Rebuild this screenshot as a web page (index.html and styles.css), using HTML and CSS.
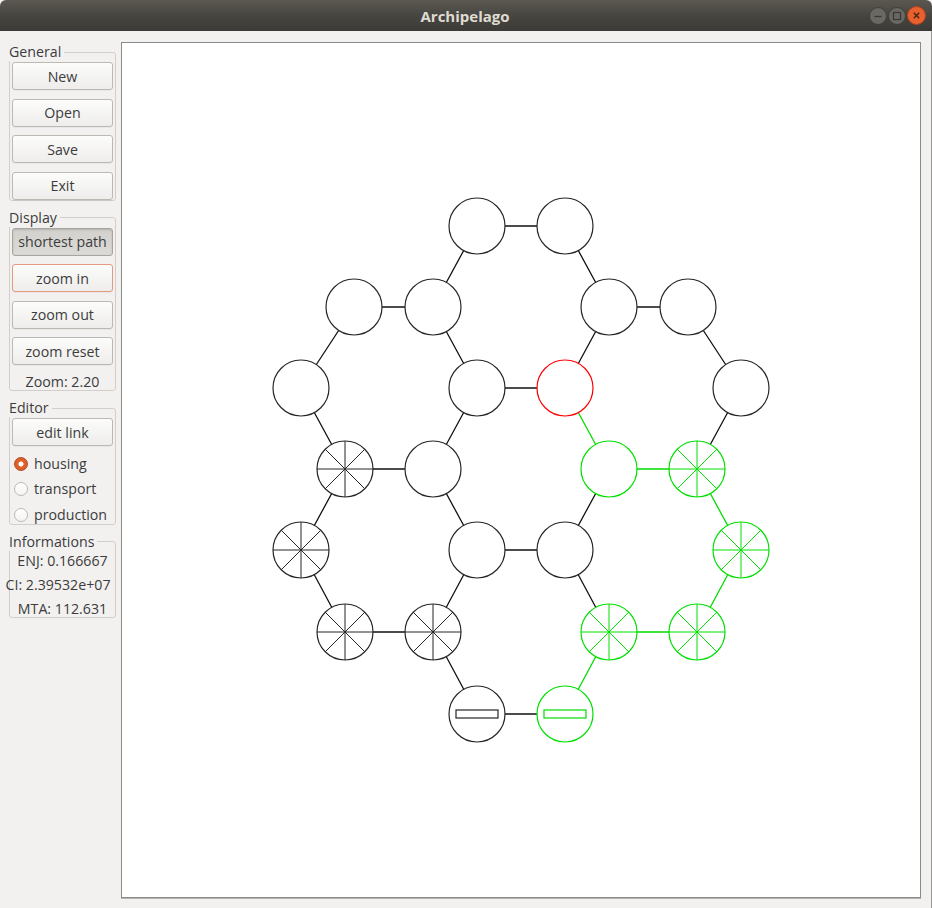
FILE: index.html
```html
<!DOCTYPE html>
<html>
<head>
<meta charset="utf-8">
<title>Archipelago</title>
<link rel="stylesheet" href="styles.css">
</head>
<body>
<div class="window">
  <header class="titlebar">
    <span class="title">Archipelago</span>
    <div class="wbtns">
      <svg class="wb" width="18" height="18" viewBox="0 0 18 18"><circle cx="9" cy="9" r="8.5" class="wb-gray"/><path d="M5.5 9.5H12.5" class="wb-glyph"/></svg>
      <svg class="wb" width="18" height="18" viewBox="0 0 18 18"><circle cx="9" cy="9" r="8.5" class="wb-gray"/><rect x="5.5" y="5.5" width="7" height="7" class="wb-glyph"/></svg>
      <svg class="wb" width="19" height="19" viewBox="0 0 19 19"><circle cx="9.5" cy="9.5" r="9" class="wb-close"/><path d="M6.8 6.8L12.2 12.2M12.2 6.8L6.8 12.2" class="wb-x"/></svg>
    </div>
  </header>
  <div class="main">
    <aside class="panel">
      <fieldset class="group">
        <legend>General</legend>
        <div class="stack">
          <button class="btn">New</button>
          <button class="btn">Open</button>
          <button class="btn">Save</button>
          <button class="btn">Exit</button>
        </div>
      </fieldset>
      <fieldset class="group">
        <legend>Display</legend>
        <div class="stack">
          <button class="btn pressed">shortest path</button>
          <button class="btn focused">zoom in</button>
          <button class="btn">zoom out</button>
          <button class="btn">zoom reset</button>
        </div>
        <div class="zoomlabel">Zoom: 2.20</div>
      </fieldset>
      <fieldset class="group">
        <legend>Editor</legend>
        <button class="btn">edit link</button>
        <div class="radios">
          <label class="radio"><span class="rb checked"></span>housing</label>
          <label class="radio"><span class="rb"></span>transport</label>
          <label class="radio"><span class="rb"></span>production</label>
        </div>
      </fieldset>
      <fieldset class="group">
        <legend>Informations</legend>
        <div class="info">
          <div class="inforow">ENJ: 0.166667</div>
          <div class="inforow wide">CI: 2.39532e+07</div>
          <div class="inforow">MTA: 112.631</div>
        </div>
      </fieldset>
    </aside>
    <div class="canvas">
      <svg class="graph" width="798" height="854" viewBox="122 43 798 854">
        <defs>
          <g id="wheel">
            <circle r="28" class="fillonly"/>
            <path d="M-28 0H28M0 -28V28M-19.8 -19.8L19.8 19.8M-19.8 19.8L19.8 -19.8" class="spokes"/>
            <circle r="28" class="ring"/>
          </g>
          <g id="node">
            <circle r="28" class="disc"/>
          </g>
          <g id="prod">
            <circle r="28" class="disc"/>
            <rect x="-21" y="-4" width="42" height="8" class="bar"/>
          </g>
        </defs>
        <g class="edges black">
          <path d="M477 226L565 226M477 226L433 307M565 226L609 307M354 307L433 307M609 307L688 307M354 307L301 388M433 307L477 388M609 307L565 388M688 307L741 388M477 388L565 388M301 388L345 469M477 388L433 469M741 388L697 469M345 469L433 469M345 469L301 550M433 469L477 550M609 469L565 550M477 550L565 550M301 550L345 632M477 550L433 632M565 550L609 632M345 632L433 632M433 632L477 714M477 714L565 714"/>
        </g>
        <g class="edges green">
          <path d="M565 388L609 469M609 469L697 469M697 469L741 550M741 550L697 632M697 632L609 632M609 632L565 714"/>
        </g>
        <g class="nodes k">
          <use href="#node" x="477" y="226"/>
          <use href="#node" x="565" y="226"/>
          <use href="#node" x="354" y="307"/>
          <use href="#node" x="433" y="307"/>
          <use href="#node" x="609" y="307"/>
          <use href="#node" x="688" y="307"/>
          <use href="#node" x="301" y="388"/>
          <use href="#node" x="477" y="388"/>
          <use href="#node" x="741" y="388"/>
          <use href="#node" x="433" y="469"/>
          <use href="#node" x="477" y="550"/>
          <use href="#node" x="565" y="550"/>
          <use href="#wheel" x="345" y="469"/>
          <use href="#wheel" x="301" y="550"/>
          <use href="#wheel" x="345" y="632"/>
          <use href="#wheel" x="433" y="632"/>
          <use href="#prod" x="477" y="714"/>
        </g>
        <g class="nodes r">
          <use href="#node" x="565" y="388"/>
        </g>
        <g class="nodes g">
          <use href="#node" x="609" y="469"/>
          <use href="#wheel" x="697" y="469"/>
          <use href="#wheel" x="741" y="550"/>
          <use href="#wheel" x="609" y="632"/>
          <use href="#wheel" x="697" y="632"/>
          <use href="#prod" x="565" y="714"/>
        </g>
      </svg>
    </div>
  </div>
</div>
</body>
</html>
```
FILE: styles.css
```css
html, body {
  margin: 0;
  padding: 0;
}
body {
  width: 932px;
  height: 908px;
  overflow: hidden;
  background: #f2f1f0;
  font-family: "Open Sans", "DejaVu Sans", sans-serif;
  color: #3c3c3c;
}
.window {
  width: 932px;
  height: 908px;
  display: flex;
  flex-direction: column;
}
.titlebar {
  height: 31px;
  flex: none;
  display: grid;
  grid-template-columns: 1fr auto 1fr;
  align-items: center;
  background: linear-gradient(#5b5852, #46443f 55%, #3c3b37);
  border-radius: 6px 6px 0 0;
}
.title {
  grid-column: 2;
  color: #dfdbd2;
  font-weight: 700;
  font-size: 15px;
  line-height: 20px;
  margin-right: 2px;
}
.wbtns {
  grid-column: 3;
  justify-self: end;
  display: flex;
  align-items: center;
  gap: 1px;
  margin-right: 6px;
}
.wb {
  display: block;
}
.wb-gray {
  fill: #6a6863;
  stroke: #3f3e3a;
  stroke-width: 1;
}
.wb-glyph {
  fill: none;
  stroke: #3a3935;
  stroke-width: 1.3;
}
.wb-close {
  fill: #e9602f;
  stroke: #b0421a;
  stroke-width: 1;
}
.wb-x {
  fill: none;
  stroke: #4a2412;
  stroke-width: 1.4;
}
.main {
  flex: 1;
  display: flex;
  gap: 5px;
  padding: 11px 10px 0 9px;
  border-right: 1px solid #9a9894;
}
.panel {
  width: 107px;
  flex: none;
  display: flex;
  flex-direction: column;
  gap: 8px;
  margin-top: 1px;
}
.group {
  margin: 0;
  padding: 1px 2px 0 2px;
  border: 1px solid #d2cfcb;
  border-radius: 3px;
  min-width: 0;
}
.group legend {
  padding: 0 3px 0 0;
  margin-left: -3px;
  font-size: 14.2px;
  line-height: 18px;
  color: #3c3c3c;
}
.stack {
  display: flex;
  flex-direction: column;
  gap: 8.5px;
}
.btn {
  display: flex;
  align-items: center;
  justify-content: center;
  width: 100%;
  height: 28px;
  padding: 0;
  margin: 0;
  box-sizing: border-box;
  border: 1px solid #bcb8b2;
  border-radius: 3px;
  background: linear-gradient(#fcfcfb, #eeedeb);
  box-shadow: 0 1px 0 rgba(0,0,0,0.04);
  font-family: "Open Sans", "DejaVu Sans", sans-serif;
  font-size: 14.2px;
  color: #3c3c3c;
}
.btn.pressed {
  background: linear-gradient(#d3d1cd, #dcdad6);
  border-color: #a8a49e;
  box-shadow: inset 0 1px 2px rgba(0,0,0,0.15);
}
.btn.focused {
  border-color: #e39a80;
}
.zoomlabel {
  margin-top: 8px;
  line-height: 17px;
  font-size: 14.2px;
  text-align: center;
}
.radios {
  display: flex;
  flex-direction: column;
  gap: 7.5px;
  margin-top: 8.5px;
}
.radio {
  display: flex;
  align-items: center;
  gap: 6px;
  padding-left: 2px;
  font-size: 14.2px;
  line-height: 18px;
}
.rb {
  width: 14px;
  height: 14px;
  box-sizing: border-box;
  border-radius: 50%;
  border: 1px solid #bdb9b3;
  background: linear-gradient(#ffffff, #f4f3f2);
  flex: none;
}
.rb.checked {
  border-color: #b84d22;
  background: radial-gradient(circle, #ffffff 0 2.2px, #e2652f 2.8px, #d2561f 100%);
}
.info {
  display: flex;
  flex-direction: column;
  gap: 7px;
}
.inforow {
  display: flex;
  justify-content: center;
  white-space: nowrap;
  font-size: 14.2px;
  line-height: 17px;
}
.inforow.wide {
  margin-left: -9px;
}
.canvas {
  width: 800px;
  height: 856px;
  flex: none;
  box-sizing: border-box;
  border: 1px solid #8a8a8a;
  background: #ffffff;
  box-shadow: 0 1px 0 #b4b4b4;
}
.graph {
  display: block;
}
.edges path {
  fill: none;
  stroke-width: 1.3;
}
.edges.black path {
  stroke: #111111;
}
.edges.green path {
  stroke: #00dd00;
}
.fillonly {
  fill: #ffffff;
  stroke: none;
}
.disc, .ring {
  fill: #ffffff;
  stroke: currentColor;
  stroke-width: 1.2;
}
.ring {
  fill: none;
}
#wheel .spokes {
  fill: none;
  stroke: currentColor;
  stroke-width: 1;
}
.bar {
  fill: none;
  stroke: currentColor;
  stroke-width: 1.2;
}
.nodes.k {
  color: #262626;
}
.nodes.r {
  color: #ff0000;
}
.nodes.g {
  color: #00e000;
}
```
